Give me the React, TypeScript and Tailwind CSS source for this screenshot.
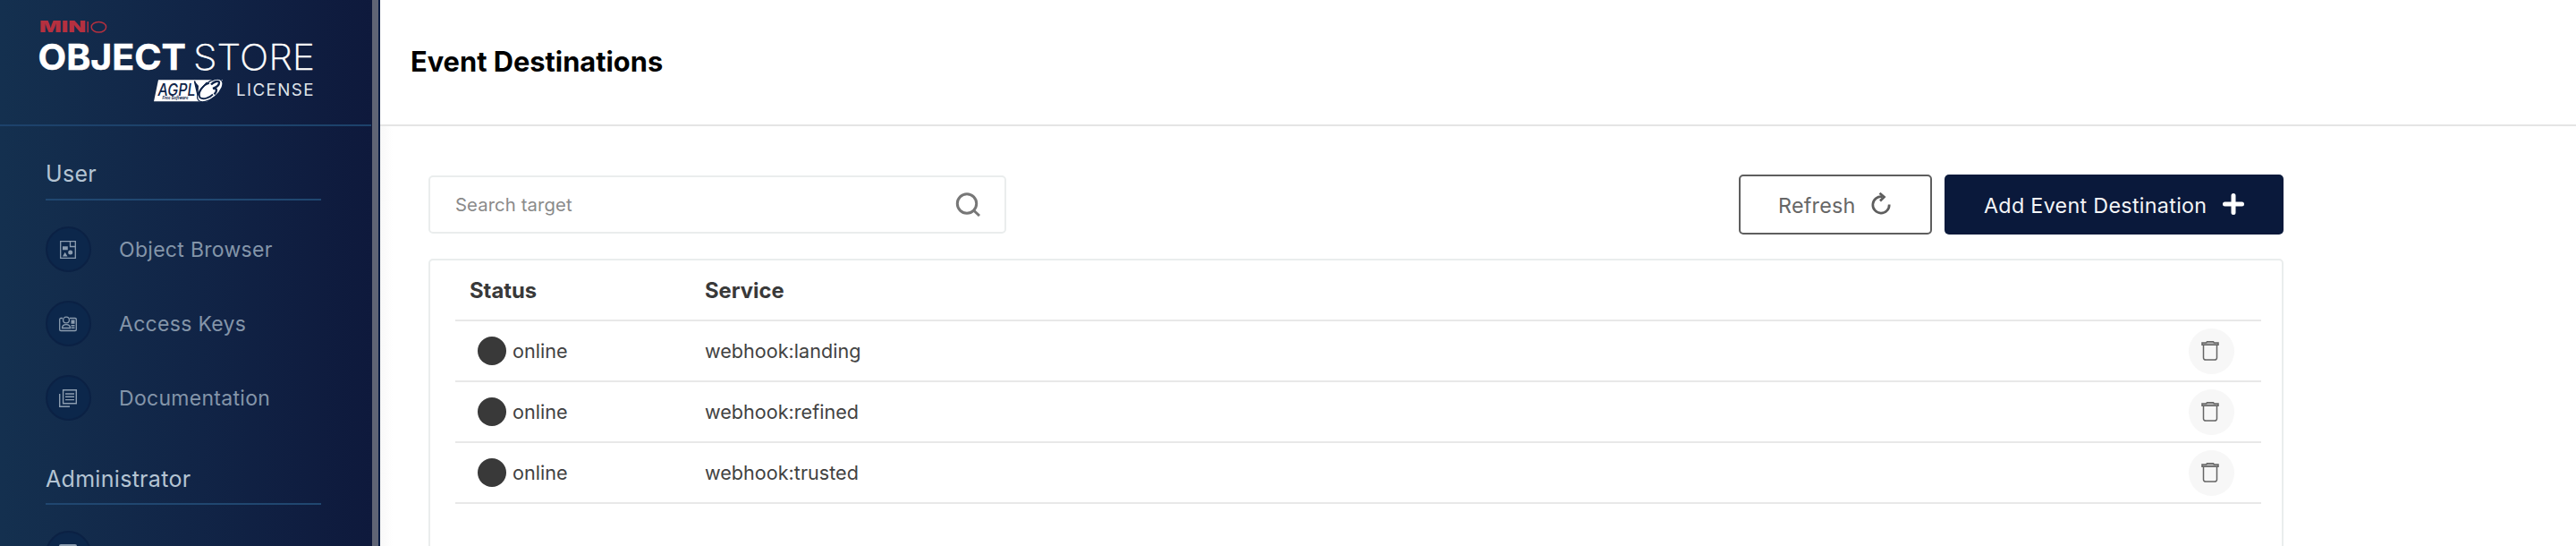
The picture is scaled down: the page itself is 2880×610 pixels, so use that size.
import React from "react";

function Logo() {
  return (
    <svg width="415" height="139" viewBox="0 0 415 139" className="block" fontFamily="Inter, sans-serif">
      <text x="44" y="36.200" textLength="52" lengthAdjust="spacingAndGlyphs" fontSize="17" fontWeight="900" fill="#b5303f">MIN</text>
      <path d="M98.200 24v12.300" stroke="#b5303f" strokeWidth="1.500" />
      <ellipse cx="110.400" cy="30.200" rx="8.200" ry="5.800" fill="none" stroke="#b5303f" strokeWidth="1.500" />
      <text x="42.500" y="78" textLength="165.500" lengthAdjust="spacingAndGlyphs" fontSize="39.500" fontWeight="700" fill="#fff" stroke="#fff" strokeWidth="0.500">OBJECT</text>
      <text x="216" y="78" textLength="136" lengthAdjust="spacingAndGlyphs" fontSize="39.500" fontWeight="200" fill="#fff" stroke="#fff" strokeWidth="0.400">STORE</text>
      <path d="M177 89.200H249L232 113.300H172z" fill="#fff" />
      <text x="176.500" y="106.500" textLength="42" lengthAdjust="spacingAndGlyphs" fontSize="18.500" fontStyle="italic" fontWeight="500" fill="#10254a">AGPL</text>
      <text x="181.500" y="111.300" textLength="29" lengthAdjust="spacingAndGlyphs" fontSize="5" fontStyle="italic" fontWeight="700" fill="#10254a">Free Software</text>
      <ellipse cx="234.800" cy="101" rx="17" ry="8.600" transform="rotate(-40 234.800 101)" fill="#fff" stroke="#10254a" strokeWidth="1.200" />
      <path d="M217.500 90.500L221 106l3.500-6 7-8" fill="none" stroke="#10254a" strokeWidth="1.500" />
      <path d="M217 90l4.500 16 .5-10z" fill="#10254a" />
      <path d="M234 93c-8 2-13 11-10.500 16 4 3 11 0 14.500-3.500" fill="none" stroke="#10254a" strokeWidth="1.800" />
      <path d="M236 94.500c3-3.500 9-5 9-2.200 0 3-4 5.500-7 6.500 5-.5 5 3 1.500 6.500" fill="none" stroke="#10254a" strokeWidth="2.400" />
      <text x="264" y="107" textLength="86.500" lengthAdjust="spacing" fontSize="18.800" fontWeight="400" fill="#dfe3ea">LICENSE</text>
    </svg>
  );
}

function ObjectIcon() {
  return (
    <svg width="20" height="20" viewBox="0 0 20 20" fill="none" stroke="#8c9db0" strokeWidth="1.300" className="-ml-[1px]">
      <path d="M1.700.700h16.600v18.600H1.700z" />
      <path d="M12.500.800v5.700h5.700" />
      <path d="M4 6.300h5.800v4H4zM4 17.500l2.700-4.700 2.800 4.700z" fill="#8c9db0" stroke="none" />
      <circle cx="12.700" cy="13" r="2.500" fill="#8c9db0" stroke="none" />
    </svg>
  );
}

function KeysIcon() {
  return (
    <svg width="20" height="18" viewBox="0 0 20 18" fill="none" stroke="#8c9db0" strokeWidth="1.300" className="-ml-[1px]">
      <path d="M4 2.500H2A1.300 1.300 0 0 0 .700 3.800v11.400A1.300 1.300 0 0 0 2 16.500h16a1.300 1.300 0 0 0 1.300-1.300V3.800A1.300 1.300 0 0 0 18 2.500h-6" />
      <circle cx="8" cy="4.500" r="3.400" />
      <path d="M3.600 13.500c0-3 1.800-3.800 4.400-3.800s4.400.800 4.400 3.800z" />
      <path d="M13.500 4.500h4v4.200h-4zM13.500 10h4v1.400h-4zM13.500 12.600h4V14h-4z" fill="#8c9db0" stroke="none" />
    </svg>
  );
}

function DocsIcon() {
  return (
    <svg width="20" height="20" viewBox="0 0 20 20" fill="none" stroke="#8c9db0" strokeWidth="1.400" className="-ml-[1px]">
      <path d="M4.600.700h14.700v15H4.600zM.700 5v14.300H12M7 5h10M7 8.300h10M7 11.600h10" />
    </svg>
  );
}

function NavItem({ icon, label }: { icon: React.ReactNode; label: string }) {
  return (
    <a className="flex h-[83px] items-center">
      <span className="flex size-[51px] items-center justify-center rounded-full border-2 border-[#0b2144] bg-[#0c274b]">{icon}</span>
      <span className="ml-[31px] pt-px text-[23px] leading-[30px] tracking-[0.300px] text-[#8495a9]">{label}</span>
    </a>
  );
}

function TrashIcon() {
  return (
    <svg width="20" height="22" viewBox="0 0 20 22" fill="none" stroke="#666" strokeWidth="1.500" className="mr-[3px]">
      <path d="M1 2h4.700L6.500.700h7L14.300 2H19v2.200H1z" fill="#b5b5b5" />
      <path d="M2.500 4.200v14.500a2.400 2.400 0 0 0 2.400 2.400h10.200a2.400 2.400 0 0 0 2.400-2.400V4.200" />
    </svg>
  );
}

const services = ["webhook:landing", "webhook:refined", "webhook:trusted"];

export default function App() {
  return (
    <div className="flex h-[610px] w-[2880px] overflow-hidden bg-white font-['Inter',sans-serif]">
      <aside className="flex w-[425px] shrink-0 bg-[#081c42]">
        <div className="w-[416px] shrink-0 bg-linear-to-r from-[#14304f] via-[#112547] to-[#0e193c]">
          <div className="h-[141px] w-[415px] border-b-2 border-[#1d426b]">
            <Logo />
          </div>
          <nav className="ml-[51px] w-[308px]">
            <h2 className="flex h-[83px] items-end border-b-2 border-[#204770] pb-[13px] text-[25px] leading-[30px] tracking-[0.300px] text-[#b4c4d3]">User</h2>
            <div className="pt-[13px]">
              <NavItem icon={<ObjectIcon />} label="Object Browser" />
              <NavItem icon={<KeysIcon />} label="Access Keys" />
              <NavItem icon={<DocsIcon />} label="Documentation" />
            </div>
            <h2 className="flex h-[78px] items-end border-b-2 border-[#204770] pb-[12px] text-[25px] leading-[30px] tracking-[0.300px] text-[#b4c4d3]">Administrator</h2>
            <div className="mt-[29px] flex size-[51px] justify-center rounded-full border-2 border-[#0b2144] bg-[#0c274b] pt-[13px]">
              <span className="-ml-[1px] h-[18px] w-[20px] rounded-[2px] bg-[#8c9db0]" />
            </div>
          </nav>
        </div>
        <div className="w-[7px] bg-[#5f6475]" />
      </aside>
      <main className="min-w-0 grow">
        <header className="flex h-[141px] items-center border-b-2 border-[#e5e5e5] pb-[2px] pl-[34px]">
          <h1 className="text-[30.800px] leading-[36px] font-bold text-black">Event Destinations</h1>
        </header>
        <div className="h-[469px] bg-linear-to-r from-[#f8f8f8] to-white to-[14px] pt-[54px] pl-[54px]">
          <div className="flex w-[2074px] items-start">
            <div className="mt-[1px] flex h-[65px] w-[646px] items-center justify-between rounded-[5px] border-2 border-[#eaeded] bg-white pr-[27px] pl-[28px]">
              <span className="pt-[1px] text-[20.300px] tracking-[0.100px] text-[#8a8a8a]">Search target</span>
              <svg width="28" height="27" viewBox="0 0 28 27" fill="none" stroke="#777" strokeWidth="3">
                <circle cx="13" cy="12.500" r="10.700" />
                <path d="M20 19.500l7 6.500" />
              </svg>
            </div>
            <button className="ml-auto flex h-[67px] w-[216px] items-center rounded-[5px] border-2 border-[#5e5e5e] pl-[42px] text-[23.300px] tracking-[0.250px] text-[#666]">
              <span className="w-[86px] pt-[3px]">Refresh</span>
              <svg width="22" height="25" viewBox="0 0 22 25" className="mb-[3px] ml-[18px]" fill="none" stroke="#5e5e5e" strokeWidth="2.700">
                <path d="M12.500 4.800A9.200 9.200 0 1 0 20.200 13.500" />
                <path d="M9.500.800l5 4.200-4.500 4.500" />
              </svg>
            </button>
            <button className="ml-[14px] flex h-[67px] w-[379px] items-center rounded-[5px] bg-[#0a193b] pl-[44px] text-[23.300px] tracking-[0.300px] text-[#f4f5f7]">
              <span className="w-[249px] pt-[3px] whitespace-nowrap">Add Event Destination</span>
              <svg width="24" height="24" viewBox="0 0 24 24" className="mb-[1px] ml-[18px]" stroke="#fff" strokeWidth="5" strokeLinecap="round">
                <path d="M12 2.500v19M2.500 12h19" />
              </svg>
            </button>
          </div>
          <section className="mt-[27px] h-[340px] w-[2074px] rounded-[5px] border-2 border-[#eaeded] bg-white px-[28px] text-[#393939]">
            <div className="flex h-[68px] w-[2019px] items-center border-b-2 border-[#e8e8e8] pt-[2px] pl-[16px] text-[23.800px] font-bold">
              <span className="w-[263px]">Status</span>
              <span>Service</span>
            </div>
            {services.map((service) => (
              <div key={service} className="flex h-[68px] w-[2019px] items-center border-b-2 border-[#e8e8e8] pl-[25px] text-[21.600px]">
                <span className="size-[32px] rounded-full bg-[#393939]" />
                <span className="ml-[7px] w-[215px] text-[#424242]">online</span>
                <span className="text-[#424242]">{service}</span>
                <button className="mr-[30px] ml-auto flex size-[51px] items-center justify-center rounded-full bg-[#f7f7f7]">
                  <TrashIcon />
                </button>
              </div>
            ))}
          </section>
        </div>
      </main>
    </div>
  );
}
